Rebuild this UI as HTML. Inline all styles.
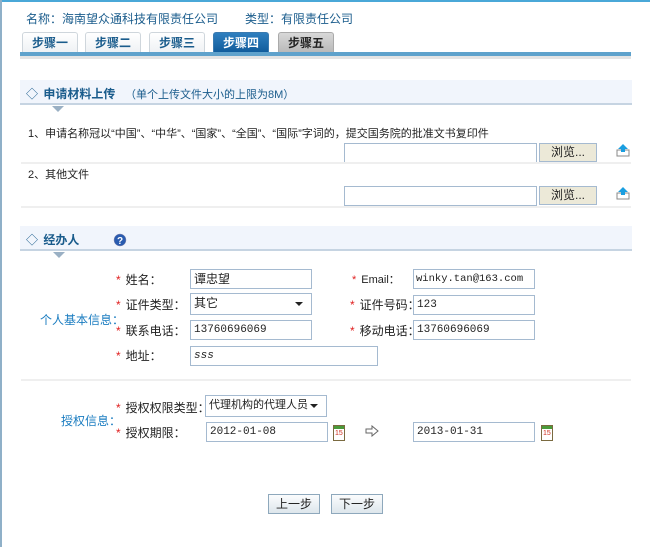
<!DOCTYPE html>
<html><head><meta charset="utf-8"><style>
*{margin:0;padding:0;box-sizing:border-box}
body{width:650px;height:547px;position:relative;background:#fff;font-family:"Liberation Sans","Noto Sans CJK SC",sans-serif;font-size:12px;color:#222;overflow:hidden}
.a{position:absolute;white-space:nowrap}
.tab{position:absolute;top:32px;height:21px;width:56px;border:1px solid #cfd6dc;border-bottom:none;border-radius:3px 3px 0 0;background:linear-gradient(#fff,#eef1f4);color:#1a5c8c;font-weight:bold;text-align:center;line-height:20px;font-size:12px}
.in{position:absolute;height:20px;border:1px solid #a5bad0;background:#fff;font-size:11px;line-height:18px;padding-left:3px;font-family:"Liberation Mono","Noto Sans CJK SC",monospace;overflow:hidden}
.lbl{position:absolute;font-size:12px;white-space:nowrap}
.lbl b{color:#e02020;font-weight:normal;margin-right:5px}
.hdr{position:absolute;left:20px;width:612px;height:25px;background:#f1f5fc;border-bottom:2px solid #c6d4e2}
.tri{position:absolute;width:0;height:0;border-left:6px solid transparent;border-right:6px solid transparent;border-top:6px solid #9ab0c4}
.sep{position:absolute;left:21px;width:610px;height:2px;background:#efefef}
.br{position:absolute;width:58px;height:19px;background:#ece9d8;border:1px solid #a5bad0;text-align:center;line-height:17px;font-size:12px}
.up{position:absolute;width:14px;height:14px}
.cal{position:absolute;width:12px;height:16px;border:1px solid #7a6a40;background:#fff}
.cal:before{content:"";position:absolute;left:0;top:0;width:10px;height:3px;background:#4a9a3a}
.cal:after{content:"15";position:absolute;left:1px;top:4px;font-size:7px;color:#d03020;line-height:8px}
.btn{position:absolute;top:494px;width:52px;height:20px;border:1px solid #8ea8bc;background:linear-gradient(#fbfcfd,#dde6ec);text-align:center;line-height:18px;font-size:12px}
.sel:after{content:"";position:absolute;right:8px;top:8px;border-left:4px solid transparent;border-right:4px solid transparent;border-top:4px solid #222}
</style></head><body>
<div class="a" style="left:0;top:0;width:650px;height:2px;background:#4aa8d8"></div>
<div class="a" style="left:0;top:0;width:2px;height:547px;background:#8fb0c8"></div>

<div class="a" style="left:26px;top:10px;color:#1a5c8c">名称：海南望众通科技有限责任公司</div>
<div class="a" style="left:245px;top:10px;color:#1a5c8c">类型：有限责任公司</div>

<div class="tab" style="left:22px">步骤一</div>
<div class="tab" style="left:85px">步骤二</div>
<div class="tab" style="left:149px">步骤三</div>
<div class="tab" style="left:213px;background:linear-gradient(#2f7fbf,#0f5a9a);color:#fff;border-color:#3a7ab0">步骤四</div>
<div class="tab" style="left:278px;background:linear-gradient(#d8d8d8,#b8b8b8);color:#222;border-color:#aaa">步骤五</div>
<div class="a" style="left:20px;top:52px;width:611px;height:4px;background:#5fa2cc"></div>
<div class="a" style="left:20px;top:56px;width:611px;height:3px;background:#e4e4e4"></div>

<div class="hdr" style="top:80px"></div>
<div class="a" style="left:26px;top:85px;color:#1a5c8c;font-size:12px">◇ <b style="margin-left:2px">申请材料上传</b></div>
<div class="a" style="left:125px;top:86px;color:#1a5c8c;font-size:11px">（单个上传文件大小的上限为8M）</div>
<div class="tri" style="left:52px;top:106px"></div>

<div class="a" style="left:28px;top:125px;font-size:11px">1、申请名称冠以“中国”、“中华”、“国家”、“全国”、“国际”字词的，提交国务院的批准文书复印件</div>
<div class="in" style="left:344px;top:143px;width:193px"></div>
<div class="br" style="left:539px;top:143px">浏览...</div>
<svg class="up" style="left:616px;top:143px" viewBox="0 0 14 14"><rect x="1" y="7" width="12" height="6" fill="#fff" stroke="#888"/><path d="M7 1 L12 6 L9 6 L9 9 L5 9 L5 6 L2 6Z" fill="#1a9ee0"/></svg>
<div class="sep" style="top:162px"></div>
<div class="a" style="left:28px;top:166px;font-size:11px">2、其他文件</div>
<div class="in" style="left:344px;top:186px;width:193px"></div>
<div class="br" style="left:539px;top:186px">浏览...</div>
<svg class="up" style="left:616px;top:186px" viewBox="0 0 14 14"><rect x="1" y="7" width="12" height="6" fill="#fff" stroke="#888"/><path d="M7 1 L12 6 L9 6 L9 9 L5 9 L5 6 L2 6Z" fill="#1a9ee0"/></svg>
<div class="sep" style="top:206px"></div>

<div class="hdr" style="top:226px"></div>
<div class="a" style="left:26px;top:231px;color:#1a5c8c">◇ <b style="margin-left:2px">经办人</b></div>
<svg class="a" style="left:113px;top:233px" width="14" height="14" viewBox="0 0 14 14"><circle cx="7" cy="7" r="6" fill="#2a5cb0" stroke="#88a" stroke-width=".5"/><text x="7" y="11" font-size="10" font-weight="bold" fill="#fff" text-anchor="middle" font-family="Liberation Sans">?</text></svg>
<div class="tri" style="left:53px;top:252px"></div>

<div class="lbl" style="left:40px;top:311px;color:#1a7cc0">个人基本信息：</div>
<div class="lbl" style="left:116px;top:271px"><b>*</b>姓名：</div>
<div class="in" style="left:190px;top:269px;width:122px;font-family:'Liberation Sans','Noto Sans CJK SC',sans-serif;font-size:12px">谭忠望</div>
<div class="lbl" style="left:116px;top:296px"><b>*</b>证件类型：</div>
<div class="in sel" style="left:190px;top:293px;width:122px;height:22px;font-family:'Liberation Sans','Noto Sans CJK SC',sans-serif;font-size:12px">其它</div>
<div class="lbl" style="left:116px;top:322px"><b>*</b>联系电话：</div>
<div class="in" style="left:190px;top:320px;width:122px">13760696069</div>
<div class="lbl" style="left:116px;top:347px"><b>*</b>地址：</div>
<div class="in" style="left:190px;top:346px;width:188px;font-style:italic">sss</div>

<div class="lbl" style="left:352px;top:271px;font-size:11px"><b>*</b>Email：</div>
<div class="in" style="left:413px;top:269px;width:122px;font-size:10.5px;padding-left:2px">winky.tan@163.com</div>
<div class="lbl" style="left:350px;top:296px"><b>*</b>证件号码：</div>
<div class="in" style="left:413px;top:295px;width:122px">123</div>
<div class="lbl" style="left:350px;top:322px"><b>*</b>移动电话：</div>
<div class="in" style="left:413px;top:320px;width:122px">13760696069</div>

<div class="sep" style="top:379px"></div>

<div class="lbl" style="left:61px;top:412px;color:#1a7cc0">授权信息：</div>
<div class="lbl" style="left:116px;top:399px"><b>*</b>授权权限类型：</div>
<div class="in sel" style="left:205px;top:395px;width:122px;height:22px;font-family:'Liberation Sans','Noto Sans CJK SC',sans-serif;font-size:11px">代理机构的代理人员</div>
<div class="lbl" style="left:116px;top:424px"><b>*</b>授权期限：</div>
<div class="in" style="left:206px;top:422px;width:122px">2012-01-08</div>
<div class="cal" style="left:333px;top:425px"></div>
<svg class="a" style="left:365px;top:425px" width="14" height="12" viewBox="0 0 14 12"><path d="M1 4 H7 V1 L13 6 L7 11 V8 H1 Z" fill="#fff" stroke="#666"/></svg>
<div class="in" style="left:413px;top:422px;width:122px">2013-01-31</div>
<div class="cal" style="left:541px;top:425px"></div>

<div class="btn" style="left:268px">上一步</div>
<div class="btn" style="left:331px">下一步</div>
</body></html>
